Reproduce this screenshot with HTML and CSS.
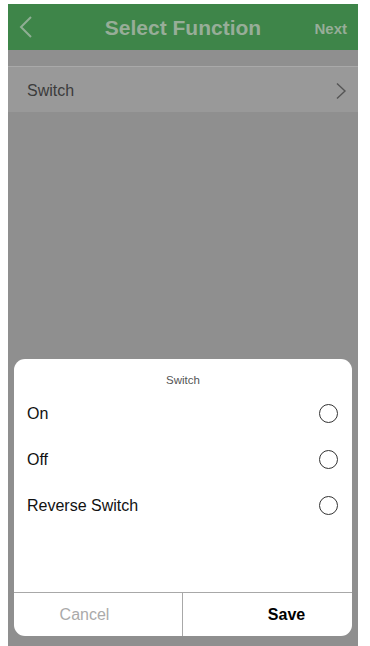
FILE: index.html
```html
<!DOCTYPE html>
<html>
<head>
<meta charset="utf-8">
<link rel="stylesheet" href="styles.css">
</head>
<body>
<div class="app">
  <header class="nav">
    <svg class="back" width="14" height="24" viewBox="0 0 14 24"><polyline points="12,2 2,12 12,22" fill="none" stroke="#8fae94" stroke-width="2"/></svg>
    <div class="title">Select Function</div>
    <div class="next">Next</div>
  </header>
  <div class="content">
    <div class="row">
      <span>Switch</span>
      <svg width="12" height="18" viewBox="0 0 12 18"><polyline points="2,1.5 10,9 2,16.5" fill="none" stroke="#555" stroke-width="1.4"/></svg>
    </div>
  </div>
  <div class="sheet">
    <div class="sheet-title">Switch</div>
    <div class="opt"><span>On</span><span class="radio"></span></div>
    <div class="opt"><span>Off</span><span class="radio"></span></div>
    <div class="opt"><span>Reverse Switch</span><span class="radio"></span></div>
    <div class="actions">
      <div class="btn cancel">Cancel</div>
      <div class="btn save">Save</div>
    </div>
  </div>
</div>
</body>
</html>
```
FILE: styles.css
```css
html, body { margin: 0; padding: 0; background: #fff; }
body { font-family: "Liberation Sans", Arial, sans-serif; }
.app {
  position: relative;
  margin: 4px 12px 0 8px;
  height: 642px;
  background: #8f8f8f;
  overflow: hidden;
}
.nav {
  height: 46px;
  background: #3e8549;
  display: flex;
  align-items: center;
  position: relative;
}
.back { margin-left: 11px; }
.title {
  position: absolute;
  left: 0; right: 0;
  top: 0; bottom: 0;
  padding-top: 2px;
  display: flex;
  align-items: center;
  justify-content: center;
  font-weight: bold;
  font-size: 21px;
  color: #97ad98;
  pointer-events: none;
}
.next {
  margin-left: auto;
  margin-right: 11px;
  padding-top: 2px;
  font-weight: bold;
  font-size: 15px;
  color: #97ad98;
}
.content { padding-top: 16px; }
.row {
  border-top: 1px solid #a9a9a9;
  height: 46px;
  background: #999999;
  display: flex;
  align-items: center;
  justify-content: space-between;
  padding: 2px 11px 0 19px;
  box-sizing: border-box;
  font-size: 16px;
  color: #3c3c3c;
}
.sheet {
  position: absolute;
  left: 6px; right: 6px;
  top: 355px; height: 277px;
  background: #fff;
  border-radius: 11px;
  display: flex;
  flex-direction: column;
  overflow: hidden;
}
.sheet-title {
  height: 31px;
  padding-top: 14px;
  box-sizing: border-box;
  line-height: 14px;
  text-align: center;
  font-size: 11.5px;
  color: #555;
}
.opt {
  height: 46px;
  display: flex;
  align-items: center;
  justify-content: space-between;
  padding: 1px 14px 0 13px;
  box-sizing: border-box;
  font-size: 16px;
  color: #111;
}
.radio {
  width: 17px; height: 17px;
  border: 1px solid #333;
  border-radius: 50%;
}
.actions {
  margin-top: auto;
  height: 43px;
  border-top: 1px solid #a8a8a8;
  display: flex;
}
.btn {
  flex: none;
  width: 50%;
  box-sizing: border-box;
  display: flex;
  align-items: center;
  justify-content: center;
  font-size: 16px;
}
.cancel { color: #aaa; border-right: 1px solid #a8a8a8; padding-right: 27px; }
.save { color: #000; font-weight: bold; padding-left: 38px; }
```
